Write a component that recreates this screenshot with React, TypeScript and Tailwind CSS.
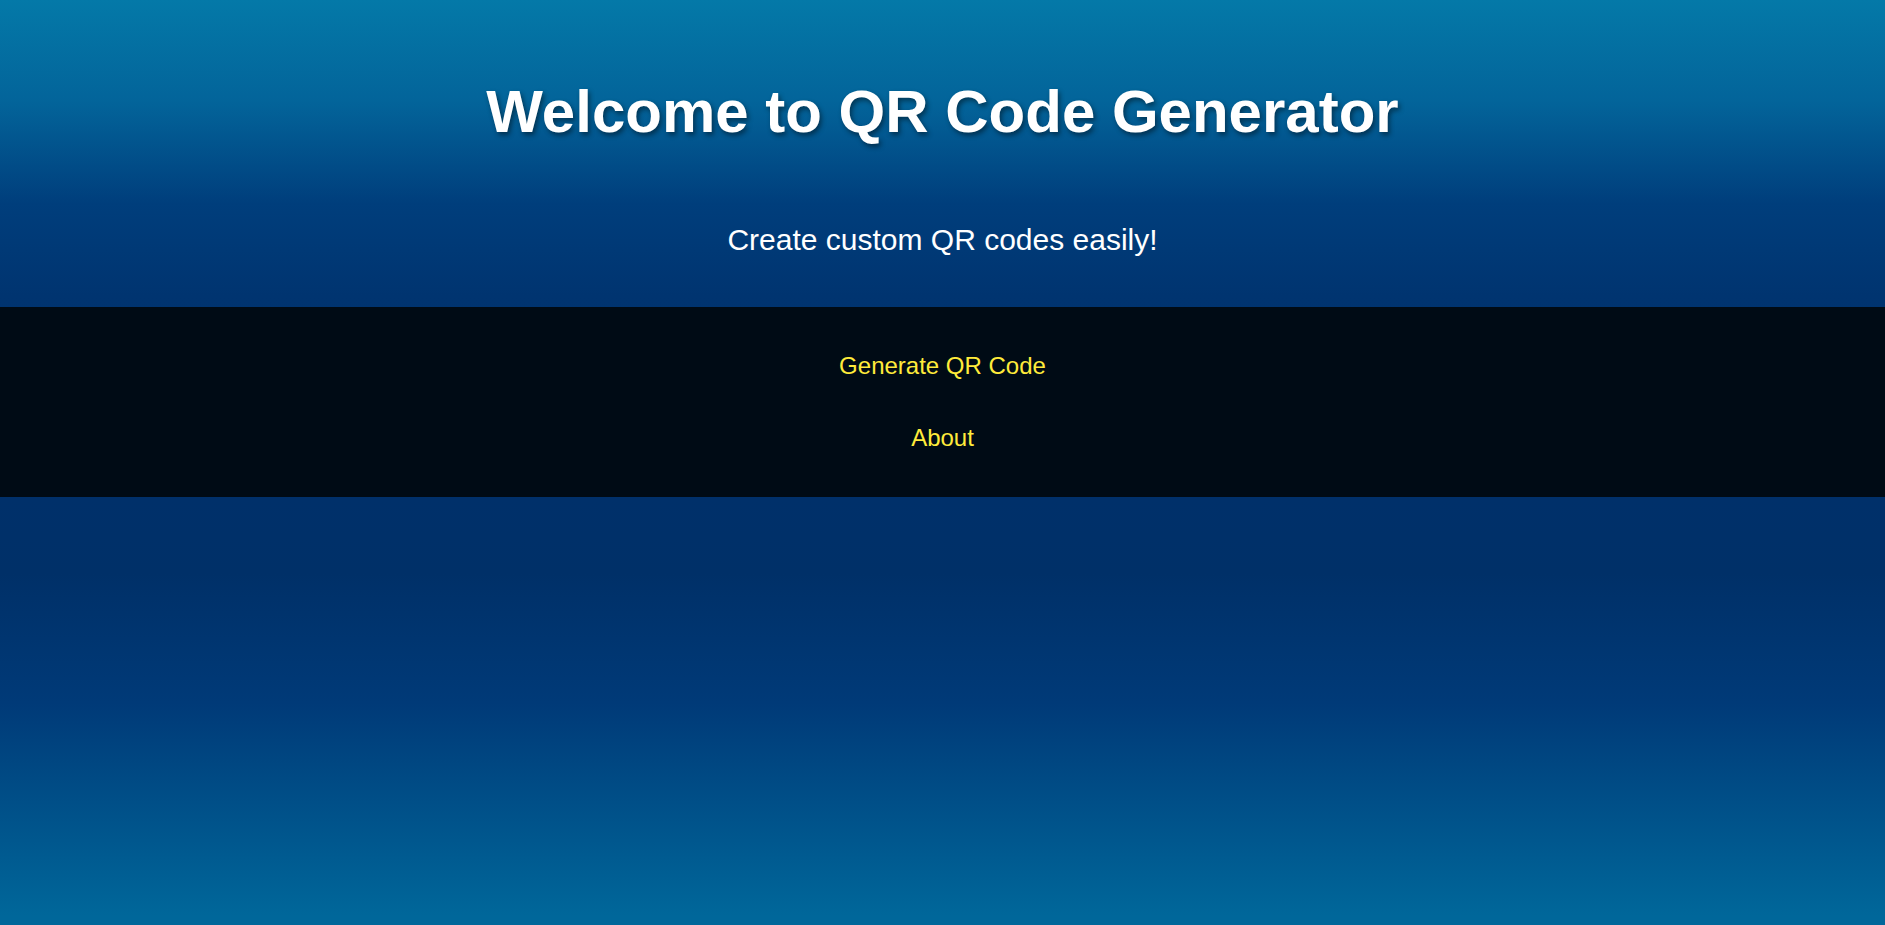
const navLinks = ["Generate QR Code", "About"];

function Header() {
  return (
    <header className="pt-[77px] pb-[50px] text-center text-white">
      <h1 className="text-[60px] font-bold leading-[69px] [text-shadow:2px_3px_5px_rgba(0,0,0,0.45)]">
        Welcome to QR Code Generator
      </h1>
      <p className="mt-[77px] text-[30px] leading-[34px]">
        Create custom QR codes easily!
      </p>
    </header>
  );
}

function Nav() {
  return (
    <nav className="bg-[#000b15] pt-[45px] pb-[46px]">
      <ul className="flex flex-col items-center gap-[45px]">
        {navLinks.map((label) => (
          <li key={label} className="text-[24px] leading-[27px]">
            <a href="#" className="text-[#ffeb3b]">
              {label}
            </a>
          </li>
        ))}
      </ul>
    </nav>
  );
}

export default function App() {
  return (
    <div className="min-h-[925px] bg-[linear-gradient(to_bottom,#0479a8_0%,#03649a_11%,#003e7c_22%,#003470_32%,#00306a_54%,#003068_62%,#003a78_76%,#00679a_99%)] font-['Liberation_Sans',Arial,sans-serif]">
      <Header />
      <Nav />
    </div>
  );
}
